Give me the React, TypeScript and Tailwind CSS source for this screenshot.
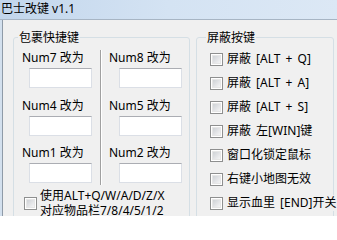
import React from "react";

const leftRows = [
  ["Num7 改为", "Num8 改为"],
  ["Num4 改为", "Num5 改为"],
  ["Num1 改为", "Num2 改为"],
];

const blockItems = [
  "屏蔽 [ALT + Q]",
  "屏蔽 [ALT + A]",
  "屏蔽 [ALT + S]",
  "屏蔽 左[WIN]键",
  "窗口化锁定鼠标",
  "右键小地图无效",
  "显示血里 [END]开关",
];

function CheckBox() {
  return (
    <span className="block w-[13px] h-[13px] shrink-0 border border-[#8e8f8f] bg-white p-[1px]">
      <span className="block w-full h-full border border-[#e6e6e6] bg-gradient-to-br from-[#cfd2d6] to-[#f4f4f5]" />
    </span>
  );
}

function TextBox() {
  return (
    <div className="w-[63px] h-[20px] bg-white border border-[#dbdfe6] border-t-[#abadb3]" />
  );
}

export default function App() {
  return (
    <div className="w-[337px] h-[216px] overflow-hidden flex flex-col bg-[#f0f0f0] text-black text-[12px] font-['Noto_Sans','Noto_Sans_CJK_SC',sans-serif]">
      {/* title bar */}
      <div className="h-[20px] shrink-0 flex items-center pl-[1px] pb-[2px] leading-none border-b border-[#a7b5c4] bg-gradient-to-r from-[#c2d6ec] via-[#d4e3f3] to-[#dce8f5]">
        巴士改键 v1.1
      </div>

      <div className="flex-1 flex min-h-0">
        <div className="w-[3px] shrink-0 bg-[#d3e0ee] border-r border-[#8f9ba8]" />

        {/* 包裹快捷键 */}
        <fieldset className="ml-[10px] mt-[10px] w-[177px] h-[200px] shrink-0 min-w-0 border border-[#d5dfe5] rounded-[3px]">
          <legend className="ml-[4px] px-[1px] leading-[15px]">包裹快捷键</legend>
          <div className="flex pt-[5px]">
            {[0, 1].map((col) => (
              <React.Fragment key={col}>
                {col === 1 && (
                  <div className="w-[2px] h-[135px] shrink-0 border-l border-[#a0a0a0] border-r border-r-white" />
                )}
                <div className={col === 0 ? "w-[86px] flex flex-col" : "flex-1 flex flex-col"}>
                  {leftRows.map((row, i) => (
                    <div
                      key={i}
                      className={`flex flex-col ${i === 1 ? "mt-[10px]" : i === 2 ? "mt-[9px]" : ""}`}
                    >
                      <span className={`leading-[16px] whitespace-nowrap ${col === 0 ? "pl-[8px]" : "pl-[7px]"}`}>
                        {row[col]}
                      </span>
                      <div className={`mt-[2px] ${col === 0 ? "ml-[15px]" : "ml-[17px]"}`}>
                        <TextBox />
                      </div>
                    </div>
                  ))}
                </div>
              </React.Fragment>
            ))}
          </div>
          <div className="flex items-center gap-[3px] pl-[10px] mt-[3px]">
            <CheckBox />
            <span className="leading-[15px] whitespace-nowrap">
              使用ALT+Q/W/A/D/Z/X
              <br />
              对应物品栏7/8/4/5/1/2
            </span>
          </div>
        </fieldset>

        {/* 屏蔽按键 */}
        <fieldset className="ml-[6px] mt-[10px] w-[138px] h-[200px] shrink-0 min-w-0 border border-[#d5dfe5] rounded-[3px]">
          <legend className="ml-[9px] px-[1px] leading-[15px]">屏蔽按键</legend>
          <div className="flex flex-col pt-[2px] pl-[13px]">
            {blockItems.map((label) => (
              <div key={label} className="h-[24px] flex items-center gap-[4px]">
                <CheckBox />
                <span className="relative whitespace-pre bg-[#f0f0f0] leading-[16px] [word-spacing:2px]">{label}</span>
              </div>
            ))}
          </div>
        </fieldset>
      </div>
    </div>
  );
}
